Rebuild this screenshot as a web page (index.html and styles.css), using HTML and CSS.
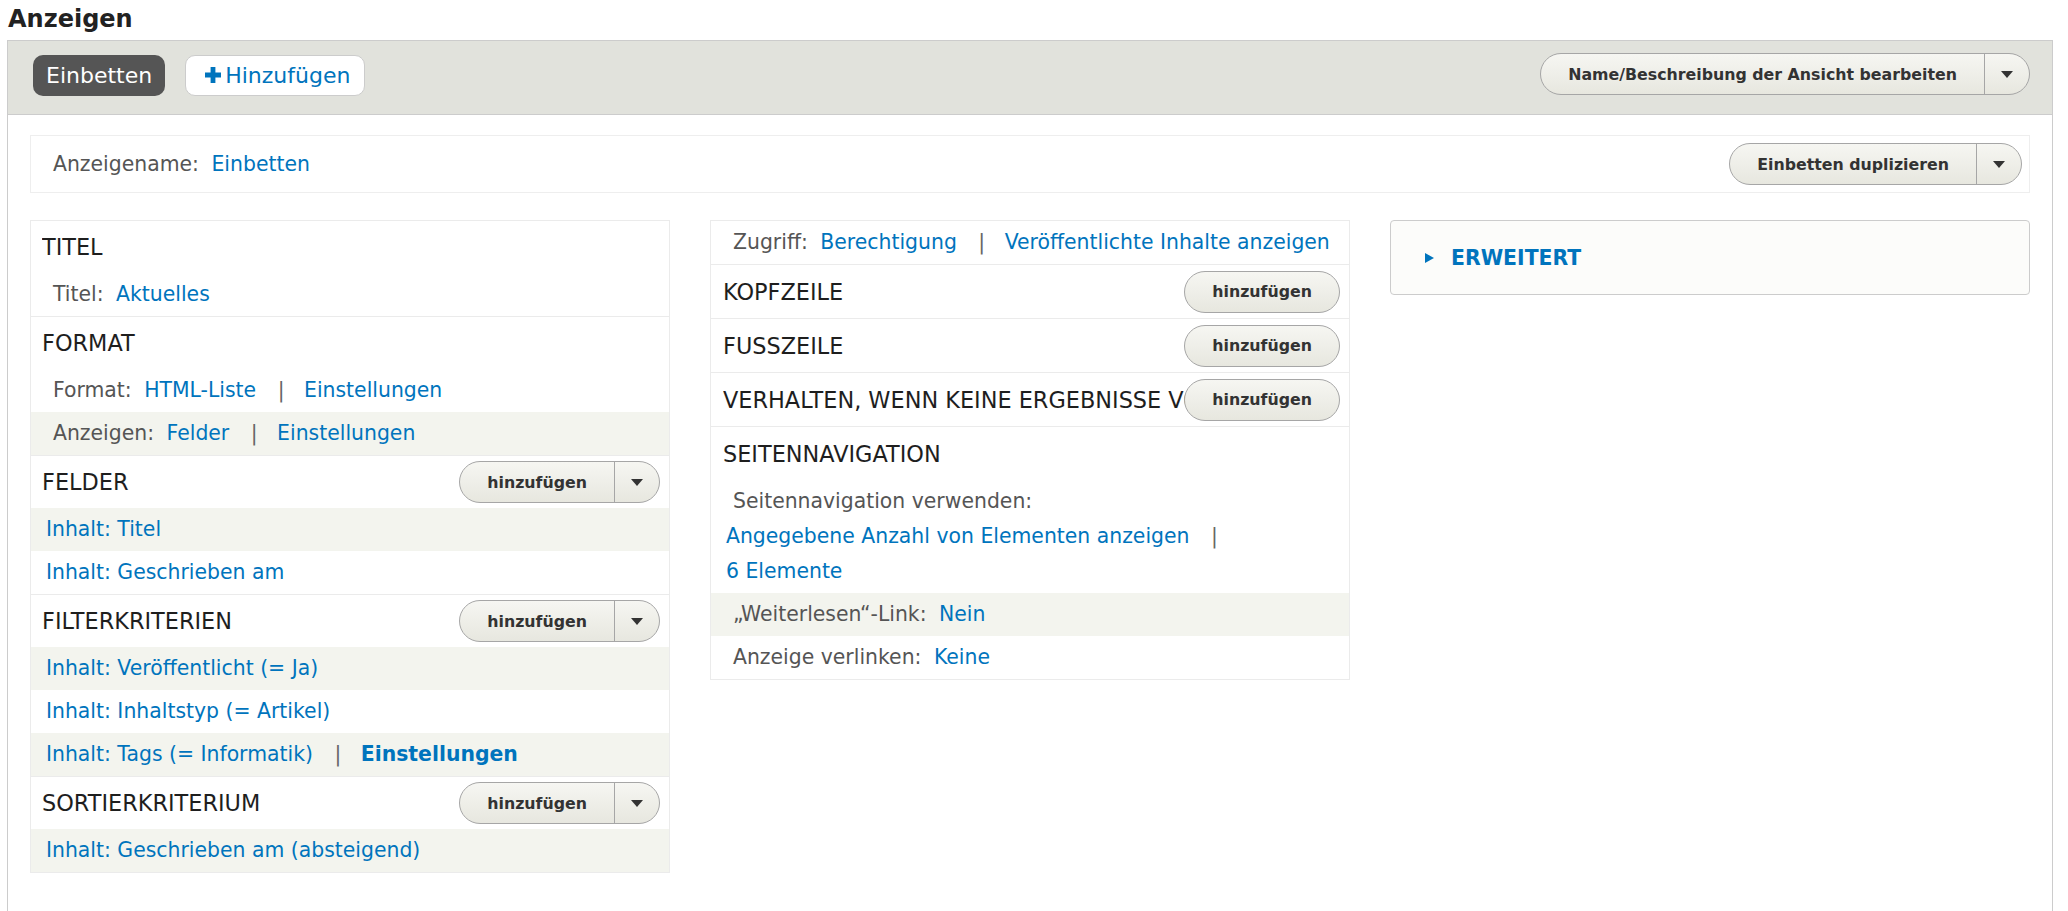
FILE: index.html
```html
<!DOCTYPE html>
<html lang="de">
<head>
<meta charset="utf-8">
<title>Anzeigen</title>
<link rel="stylesheet" href="styles.css">
</head>
<body>
<h1 class="page-title">Anzeigen</h1>
<div class="views-wrap">
  <div class="tabs-bar">
    <div class="tabs">
      <a class="tab tab-active">Einbetten</a>
      <a class="tab tab-add"><svg class="plus" width="16" height="16" viewBox="0 0 16 16"><path d="M5.6 0h4.8v5.6H16v4.8h-5.6V16H5.6v-5.6H0V5.6h5.6z" fill="#0074bd"/></svg>Hinzufügen</a>
    </div>
    <div class="btn-split btn-top">
      <span class="btn-main">Name/Beschreibung der Ansicht bearbeiten</span>
      <span class="btn-drop"><svg width="12" height="7" viewBox="0 0 12 7"><polygon points="0,0 12,0 6,7" fill="#333"/></svg></span>
    </div>
  </div>

  <div class="display-body">
    <div class="display-name">
      <div><span class="label">Anzeigename:</span> <a>Einbetten</a></div>
      <div class="btn-split">
        <span class="btn-main">Einbetten duplizieren</span>
        <span class="btn-drop"><svg width="12" height="7" viewBox="0 0 12 7"><polygon points="0,0 12,0 6,7" fill="#333"/></svg></span>
      </div>
    </div>

    <div class="columns">
      <div class="col col-left">
        <section class="sec">
          <div class="sec-head"><h3>Titel</h3></div>
          <div class="row"><span class="label">Titel:</span> <a>Aktuelles</a></div>
        </section>
        <section class="sec">
          <div class="sec-head"><h3>Format</h3></div>
          <div class="row"><span class="label">Format:</span> <a>HTML-Liste</a> <span class="sep">|</span> <a>Einstellungen</a></div>
          <div class="row alt"><span class="label">Anzeigen:</span> <a>Felder</a> <span class="sep">|</span> <a>Einstellungen</a></div>
        </section>
        <section class="sec">
          <div class="sec-head"><h3>Felder</h3>
            <div class="btn-split">
              <span class="btn-main">hinzufügen</span>
              <span class="btn-drop"><svg width="12" height="7" viewBox="0 0 12 7"><polygon points="0,0 12,0 6,7" fill="#333"/></svg></span>
            </div>
          </div>
          <div class="row alt"><a>Inhalt: Titel</a></div>
          <div class="row"><a>Inhalt: Geschrieben am</a></div>
        </section>
        <section class="sec">
          <div class="sec-head"><h3>Filterkriterien</h3>
            <div class="btn-split">
              <span class="btn-main">hinzufügen</span>
              <span class="btn-drop"><svg width="12" height="7" viewBox="0 0 12 7"><polygon points="0,0 12,0 6,7" fill="#333"/></svg></span>
            </div>
          </div>
          <div class="row alt"><a>Inhalt: Veröffentlicht (= Ja)</a></div>
          <div class="row"><a>Inhalt: Inhaltstyp (= Artikel)</a></div>
          <div class="row alt"><a>Inhalt: Tags (= Informatik)</a> <span class="sep">|</span> <a class="bold">Einstellungen</a></div>
        </section>
        <section class="sec">
          <div class="sec-head"><h3>Sortierkriterium</h3>
            <div class="btn-split">
              <span class="btn-main">hinzufügen</span>
              <span class="btn-drop"><svg width="12" height="7" viewBox="0 0 12 7"><polygon points="0,0 12,0 6,7" fill="#333"/></svg></span>
            </div>
          </div>
          <div class="row alt"><a>Inhalt: Geschrieben am (absteigend)</a></div>
        </section>
      </div>

      <div class="col col-mid">
        <div class="row"><span class="label">Zugriff:</span> <a>Berechtigung</a> <span class="sep">|</span> <a>Veröffentlichte Inhalte anzeigen</a></div>
        <section class="sec">
          <div class="sec-head"><h3>Kopfzeile</h3><span class="btn">hinzufügen</span></div>
        </section>
        <section class="sec">
          <div class="sec-head"><h3>Fußzeile</h3><span class="btn">hinzufügen</span></div>
        </section>
        <section class="sec">
          <div class="sec-head"><h3>Verhalten, wenn keine Ergebnisse vorliegen</h3><span class="btn">hinzufügen</span></div>
        </section>
        <section class="sec">
          <div class="sec-head"><h3>Seitennavigation</h3></div>
          <div class="row row-wrap"><span class="label">Seitennavigation verwenden:</span> <a>Angegebene Anzahl von Elementen anzeigen</a> <span class="sep">|</span> <a>6 Elemente</a></div>
          <div class="row alt"><span class="label">„Weiterlesen“-Link:</span> <a>Nein</a></div>
          <div class="row"><span class="label">Anzeige verlinken:</span> <a>Keine</a></div>
        </section>
      </div>

      <div class="col-right">
        <div class="details">
          <svg width="9" height="10" viewBox="0 0 9 10"><polygon points="0,0 9,5 0,10" fill="#0074bd"/></svg>
          <span>Erweitert</span>
        </div>
      </div>
    </div>
  </div>
</div>
</body>
</html>
```

FILE: styles.css
```css
* { box-sizing: border-box; }

body {
  margin: 0;
  font-family: "DejaVu Sans", "Liberation Sans", sans-serif;
  color: #333;
  background: #fff;
}

a {
  color: #0074bd;
  text-decoration: none;
}

.page-title {
  margin: 0;
  padding: 4px 0 0 8px;
  height: 40px;
  font-size: 24px;
  line-height: 30px;
  font-weight: bold;
  color: #222;
}

.views-wrap {
  margin: 0 15px 0 7px;
  border: 1px solid #ccc;
  border-bottom: none;
}

.tabs-bar {
  display: flex;
  justify-content: space-between;
  align-items: flex-start;
  background: #e1e2dc;
  border-bottom: 1px solid #ccc;
  padding: 14px 22px 18px 25px;
}

.tabs {
  display: flex;
  gap: 20px;
}

.tab {
  display: flex;
  align-items: center;
  height: 41px;
  border-radius: 10px;
  font-size: 22px;
}

.tab-active {
  background: #555;
  color: #fff;
  padding: 0 13px;
}

.tab-add {
  background: #fff;
  border: 1px solid #ccc;
  color: #0074bd;
  padding: 0 14px 0 19px;
  gap: 4px;
}

.plus { display: block; margin-top: -2px; }

.btn-split,
.btn {
  display: flex;
  flex: none;
  height: 42px;
  border: 1px solid #a6a6a6;
  border-radius: 21px;
  background: linear-gradient(#f6f6f2, #e7e7df);
  font-size: 15.8px;
  font-weight: bold;
  color: #333;
  white-space: nowrap;
}

.btn {
  align-items: center;
  padding: 0 27px;
}

.btn-main {
  display: flex;
  align-items: center;
  padding: 0 27px;
}

.btn-drop {
  display: flex;
  align-items: center;
  justify-content: center;
  width: 45px;
  border-left: 1px solid #a6a6a6;
}

.btn-top { margin-top: -2px; }

.display-body {
  padding: 20px 22px 160px;
}

.display-name {
  display: flex;
  justify-content: space-between;
  align-items: center;
  height: 58px;
  border: 1px solid #eee;
  padding: 0 7px 0 22px;
  font-size: 20.4px;
}

.label {
  color: #555;
  margin-right: 6px;
}

.columns {
  display: grid;
  grid-template-columns: repeat(3, 1fr);
  column-gap: 40px;
  margin-top: 27px;
  align-items: start;
}

.col {
  border: 1px solid #ebebeb;
  overflow: hidden;
  font-size: 20.4px;
}

.sec + .sec,
.row + .sec {
  border-top: 1px solid #ebebeb;
}

.sec-head {
  display: flex;
  align-items: center;
  justify-content: space-between;
  height: 52px;
  padding: 0 9px 0 11px;
}

.col-mid .sec-head {
  height: 53px;
  padding-left: 12px;
}

.sec-head h3 {
  flex: 1 1 0;
  min-width: 0;
  margin: 0 -155px 0 0;
  font-size: 22.4px;
  font-weight: normal;
  text-transform: uppercase;
  white-space: nowrap;
  overflow: hidden;
  color: #1e1e1e;
}

.row {
  padding: 4px 15px;
  line-height: 35px;
  white-space: nowrap;
}

.row > .label:first-child { margin-left: 7px; }

.alt { background: #f3f4ee; }

.sep {
  color: #666;
  margin: 0 13px 0 15px;
}

.row-wrap { white-space: normal; }
.row-wrap a { white-space: nowrap; }

.bold { font-weight: bold; }

.details {
  display: flex;
  align-items: center;
  gap: 17px;
  height: 75px;
  border: 1px solid #ccc;
  border-radius: 4px;
  background: #fcfcfa;
  padding-left: 34px;
  color: #0074bd;
  font-weight: bold;
  font-size: 20.4px;
  text-transform: uppercase;
}
```
